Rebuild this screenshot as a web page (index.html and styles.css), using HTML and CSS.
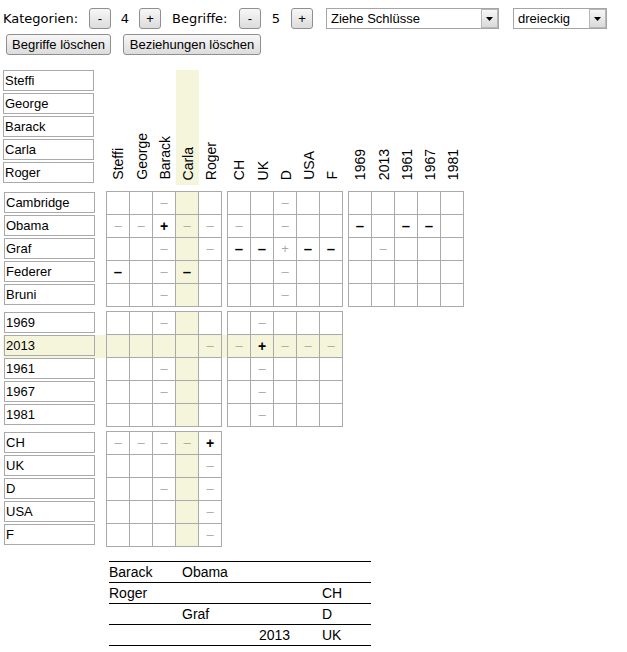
FILE: index.html
```html
<!DOCTYPE html>
<html>

<head>
  <meta charset="utf-8">
  <title>Logikrätsel</title>
  <link rel="stylesheet" href="styles.css">
</head>

<body>

  <!-- Steuerung oben -->
  <div class="controls">
    <span class="label lbl-kat">Kategorien:</span>
    <button class="step">-</button>
    <span class="count">4</span>
    <button class="step">+</button>
    <span class="label lbl-beg">Begriffe:</span>
    <button class="step">-</button>
    <span class="count count-wide">5</span>
    <button class="step">+</button>
    <div class="dropdown dd-mode">
      <span class="dd-text">Ziehe Schlüsse</span>
      <span class="dd-btn"><svg width="7" height="4" viewBox="0 0 7 4"><path d="M0 0h7L3.5 4z" fill="#000"/></svg></span>
    </div>
    <div class="dropdown dd-shape">
      <span class="dd-text">dreieckig</span>
      <span class="dd-btn"><svg width="7" height="4" viewBox="0 0 7 4"><path d="M0 0h7L3.5 4z" fill="#000"/></svg></span>
    </div>
  </div>

  <div class="actions">
    <button class="wide-btn clear-terms">Begriffe löschen</button>
    <button class="wide-btn clear-rel">Beziehungen löschen</button>
  </div>

  <!-- Raster -->
  <table class="board">
    <tr class="head">
      <td class="names">
        <input value="Steffi">
        <input value="George">
        <input value="Barack">
        <input value="Carla">
        <input value="Roger">
      </td>
      <th><span class="vert">Steffi</span></th>
      <th><span class="vert">George</span></th>
      <th><span class="vert">Barack</span></th>
      <th class="hl"><span class="vert">Carla</span></th>
      <th><span class="vert">Roger</span></th>
      <th class="gap"></th>
      <th><span class="vert">CH</span></th>
      <th><span class="vert">UK</span></th>
      <th><span class="vert">D</span></th>
      <th><span class="vert">USA</span></th>
      <th><span class="vert">F</span></th>
      <th class="gap"></th>
      <th><span class="vert">1969</span></th>
      <th><span class="vert">2013</span></th>
      <th><span class="vert">1961</span></th>
      <th><span class="vert">1967</span></th>
      <th><span class="vert">1981</span></th>
    </tr>
    <tr class="sp sp-head"><td></td></tr>

    <!-- Nachnamen -->
    <tr class="top">
      <td class="name"><input value="Cambridge"></td>
      <td class="c l"></td><td class="c"></td><td class="c"><span class="m">–</span></td><td class="c hl"></td><td class="c"></td>
      <td class="gap"></td>
      <td class="c l"></td><td class="c"></td><td class="c"><span class="m">–</span></td><td class="c"></td><td class="c"></td>
      <td class="gap"></td>
      <td class="c l"></td><td class="c"></td><td class="c"></td><td class="c"></td><td class="c"></td>
    </tr>
    <tr>
      <td class="name"><input value="Obama"></td>
      <td class="c l"><span class="m">–</span></td><td class="c"><span class="m">–</span></td><td class="c"><span class="yes">+</span></td><td class="c hl"><span class="m">–</span></td><td class="c"><span class="m">–</span></td>
      <td class="gap"></td>
      <td class="c l"><span class="m">–</span></td><td class="c"></td><td class="c"><span class="m">–</span></td><td class="c"></td><td class="c"></td>
      <td class="gap"></td>
      <td class="c l"><span class="no">–</span></td><td class="c"></td><td class="c"><span class="no">–</span></td><td class="c"><span class="no">–</span></td><td class="c"></td>
    </tr>
    <tr>
      <td class="name"><input value="Graf"></td>
      <td class="c l"></td><td class="c"></td><td class="c"><span class="m">–</span></td><td class="c hl"></td><td class="c"><span class="m">–</span></td>
      <td class="gap"></td>
      <td class="c l"><span class="no">–</span></td><td class="c"><span class="no">–</span></td><td class="c"><span class="m">+</span></td><td class="c"><span class="no">–</span></td><td class="c"><span class="no">–</span></td>
      <td class="gap"></td>
      <td class="c l"></td><td class="c"><span class="m">–</span></td><td class="c"></td><td class="c"></td><td class="c"></td>
    </tr>
    <tr>
      <td class="name"><input value="Federer"></td>
      <td class="c l"><span class="no">–</span></td><td class="c"></td><td class="c"><span class="m">–</span></td><td class="c hl"><span class="no">–</span></td><td class="c"></td>
      <td class="gap"></td>
      <td class="c l"></td><td class="c"></td><td class="c"><span class="m">–</span></td><td class="c"></td><td class="c"></td>
      <td class="gap"></td>
      <td class="c l"></td><td class="c"></td><td class="c"></td><td class="c"></td><td class="c"></td>
    </tr>
    <tr>
      <td class="name"><input value="Bruni"></td>
      <td class="c l"></td><td class="c"></td><td class="c"><span class="m">–</span></td><td class="c hl"></td><td class="c"></td>
      <td class="gap"></td>
      <td class="c l"></td><td class="c"></td><td class="c"><span class="m">–</span></td><td class="c"></td><td class="c"></td>
      <td class="gap"></td>
      <td class="c l"></td><td class="c"></td><td class="c"></td><td class="c"></td><td class="c"></td>
    </tr>
    <tr class="sp"><td></td></tr>

    <!-- Jahre -->
    <tr class="top">
      <td class="name"><input value="1969"></td>
      <td class="c l"></td><td class="c"></td><td class="c"><span class="m">–</span></td><td class="c hl"></td><td class="c"></td>
      <td class="gap"></td>
      <td class="c l"></td><td class="c"><span class="m">–</span></td><td class="c"></td><td class="c"></td><td class="c"></td>
    </tr>
    <tr class="hl">
      <td class="name"><input value="2013"></td>
      <td class="c l"></td><td class="c"></td><td class="c"></td><td class="c hl"></td><td class="c"><span class="m">–</span></td>
      <td class="gap"></td>
      <td class="c l"><span class="m">–</span></td><td class="c"><span class="yes">+</span></td><td class="c"><span class="m">–</span></td><td class="c"><span class="m">–</span></td><td class="c"><span class="m">–</span></td>
    </tr>
    <tr>
      <td class="name"><input value="1961"></td>
      <td class="c l"></td><td class="c"></td><td class="c"><span class="m">–</span></td><td class="c hl"></td><td class="c"></td>
      <td class="gap"></td>
      <td class="c l"></td><td class="c"><span class="m">–</span></td><td class="c"></td><td class="c"></td><td class="c"></td>
    </tr>
    <tr>
      <td class="name"><input value="1967"></td>
      <td class="c l"></td><td class="c"></td><td class="c"><span class="m">–</span></td><td class="c hl"></td><td class="c"></td>
      <td class="gap"></td>
      <td class="c l"></td><td class="c"><span class="m">–</span></td><td class="c"></td><td class="c"></td><td class="c"></td>
    </tr>
    <tr>
      <td class="name"><input value="1981"></td>
      <td class="c l"></td><td class="c"></td><td class="c"></td><td class="c hl"></td><td class="c"></td>
      <td class="gap"></td>
      <td class="c l"></td><td class="c"><span class="m">–</span></td><td class="c"></td><td class="c"></td><td class="c"></td>
    </tr>
    <tr class="sp"><td></td></tr>

    <!-- Länder -->
    <tr class="top">
      <td class="name"><input value="CH"></td>
      <td class="c l"><span class="m">–</span></td><td class="c"><span class="m">–</span></td><td class="c"><span class="m">–</span></td><td class="c hl"><span class="m">–</span></td><td class="c"><span class="yes">+</span></td>
    </tr>
    <tr>
      <td class="name"><input value="UK"></td>
      <td class="c l"></td><td class="c"></td><td class="c"></td><td class="c hl"></td><td class="c"><span class="m">–</span></td>
    </tr>
    <tr>
      <td class="name"><input value="D"></td>
      <td class="c l"></td><td class="c"></td><td class="c"><span class="m">–</span></td><td class="c hl"></td><td class="c"><span class="m">–</span></td>
    </tr>
    <tr>
      <td class="name"><input value="USA"></td>
      <td class="c l"></td><td class="c"></td><td class="c"></td><td class="c hl"></td><td class="c"><span class="m">–</span></td>
    </tr>
    <tr>
      <td class="name"><input value="F"></td>
      <td class="c l"></td><td class="c"></td><td class="c"></td><td class="c hl"></td><td class="c"><span class="m">–</span></td>
    </tr>
  </table>

  <!-- Lösung -->
  <table class="solution">
    <tr><td>Barack</td><td>Obama</td><td></td><td></td></tr>
    <tr><td>Roger</td><td></td><td></td><td>CH</td></tr>
    <tr><td></td><td>Graf</td><td></td><td>D</td></tr>
    <tr><td></td><td></td><td>2013</td><td>UK</td></tr>
  </table>

</body>

</html>
```

FILE: styles.css
```css
body {
  margin: 0;
  padding: 8px 0 0 3px;
  font-family: 'DejaVu Sans', sans-serif;
  font-size: 13px;
  color: #000;
  background-color: #fff;
}

/* Steuerung */
.controls {
  display: flex;
  align-items: center;
  height: 21px;
}

.label {
  display: inline-block;
  white-space: nowrap;
}

.lbl-kat {
  width: 86px;
}

.lbl-beg {
  width: 67px;
  margin-left: 11px;
}

.count {
  width: 28px;
  text-align: center;
}

.count-wide {
  width: 30px;
}

button {
  font-family: 'Liberation Sans', Arial, sans-serif;
  font-size: 13px;
  color: #000;
  height: 21px;
  padding: 0;
  border: 1px solid #8f8f8f;
  border-radius: 3px;
  background: linear-gradient(#f7f7f7, #dcdcdc);
  box-sizing: border-box;
  cursor: pointer;
}

.step {
  width: 22px;
}

.dropdown {
  display: flex;
  align-items: stretch;
  height: 21px;
  box-sizing: border-box;
  border: 1px solid #a5a5a5;
  background-color: #fff;
  font-family: 'Liberation Sans', Arial, sans-serif;
  font-size: 13px;
}

.dd-mode {
  width: 173px;
  margin-left: 13px;
}

.dd-shape {
  width: 94px;
  margin-left: 14px;
}

.dd-text {
  flex: 1;
  padding-left: 4px;
  line-height: 19px;
}

.dd-btn {
  width: 17px;
  box-sizing: border-box;
  border: 1px solid #b8b8b8;
  background: linear-gradient(#f6f6f6, #dadada);
  display: flex;
  align-items: center;
  justify-content: center;
}

.actions {
  display: flex;
  margin-top: 5px;
  padding-left: 3px;
}

.clear-terms {
  width: 105px;
}

.clear-rel {
  width: 138px;
  margin-left: 12px;
}

/* Raster */
.board {
  border-spacing: 0;
  margin-top: 15px;
}

.board td,
.board th {
  padding: 0;
}

.board input {
  display: block;
  width: 91px;
  height: 21px;
  margin: 0;
  padding: 0 1px;
  box-sizing: border-box;
  border: 1px solid #aaa;
  background-color: #fff;
  font-family: 'Liberation Sans', Arial, sans-serif;
  font-size: 13px;
  color: #000;
}

.names {
  padding: 1px 11px 0 1px;
  vertical-align: top;
}

.names input {
  margin-bottom: 2px;
}

.board .name {
  padding: 0 11px 2px 1px;
  vertical-align: bottom;
  line-height: 0;
}

.board th {
  vertical-align: bottom;
  padding-bottom: 2px;
  font-weight: normal;
}

.vert {
  display: inline-block;
  writing-mode: vertical-rl;
  transform: rotate(180deg);
  white-space: nowrap;
  font-family: 'Liberation Sans', Arial, sans-serif;
  font-size: 14px;
  line-height: 16px;
}

.gap {
  width: 5px;
}

.c {
  width: 22px;
  height: 22px;
  border-right: 1px solid #aaa;
  border-bottom: 1px solid #aaa;
  text-align: center;
  font-family: 'Liberation Sans', Arial, sans-serif;
  font-size: 13px;
  line-height: 22px;
}

.c span {
  display: inline-block;
  height: 22px;
  line-height: 22px;
  vertical-align: top;
}

.c.l {
  border-left: 1px solid #aaa;
}

tr.top .c {
  border-top: 1px solid #aaa;
}

.board .hl,
.board tr.hl td,
.board tr.hl input {
  background-color: #f5f5dc;
}

.sp td {
  height: 4px;
}

.sp-head td {
  height: 6px;
}

/* Markierungen */
.m {
  color: #aaa;
}

.no {
  font-weight: bold;
  font-size: 15px;
}

.yes {
  font-weight: bold;
  font-size: 14px;
}

/* Lösungstabelle */
.solution {
  border-collapse: collapse;
  margin: 14px 0 0 106px;
  width: 262px;
  font-family: 'Liberation Sans', Arial, sans-serif;
  font-size: 14px;
}

.solution td {
  height: 20px;
  padding: 0;
  border-top: 1px solid #000;
  border-bottom: 1px solid #000;
}

.solution td:nth-child(1) {
  width: 73px;
}

.solution td:nth-child(2) {
  width: 77px;
}

.solution td:nth-child(3) {
  width: 63px;
}
```
